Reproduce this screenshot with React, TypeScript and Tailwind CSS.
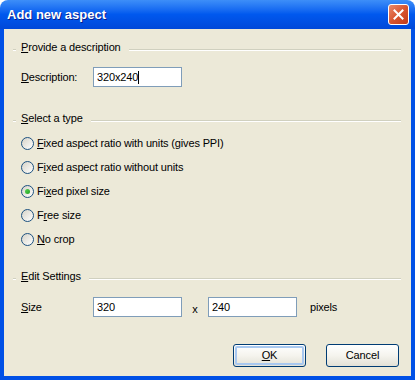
import React from 'react';

const font = { fontFamily: '"Liberation Sans", Arial, sans-serif' };

function GroupHeader({ children }: { children: React.ReactNode }) {
  return (
    <div className="flex items-center h-[14px] pl-[9px] pr-[10px]">
      <div className="w-[3px] h-[2px] mt-[6px] border-t border-[#d0d0bf] bg-white" />
      <div className="ml-[5px] text-[11px] tracking-[-0.15px] text-black leading-[14px]">{children}</div>
      <div className="flex-1 ml-[8px] mt-[6px] h-[2px] border-t border-[#d0d0bf] border-b border-b-white" />
    </div>
  );
}

function Radio({ label, checked }: { label: React.ReactNode; checked?: boolean }) {
  return (
    <div className="flex items-center h-[24px] pl-[17px]">
      <div className="w-[13px] h-[13px] rounded-full border border-[#1c5180] bg-gradient-to-br from-[#d6d3c8] to-white flex items-center justify-center">
        {checked && <div className="w-[5px] h-[5px] rounded-full bg-gradient-to-br from-[#55d651] to-[#21a121]" />}
      </div>
      <div className="ml-[3px] text-[11px] tracking-[-0.15px] leading-[14px]">{label}</div>
    </div>
  );
}

function Input({ value, caret, width }: { value: string; caret?: boolean; width: string }) {
  return (
    <div className={`${width} h-[20px] border border-[#7f9db9] bg-white flex items-center pl-[3px] text-[11px] tracking-[-0.15px]`}>
      <span>{value}</span>
      {caret && <span className="w-px h-[13px] bg-black" />}
    </div>
  );
}

function Button({ children, focused }: { children: React.ReactNode; focused?: boolean }) {
  return (
    <div className="w-[73px] h-[23px] rounded-[3px] border border-[#003c74] bg-gradient-to-b from-white via-[#f5f4ee] to-[#e3e1d6] p-px">
      <div className={`w-full h-full rounded-[2px] flex items-center justify-center text-[11px] tracking-[-0.15px] ${focused ? 'border-2 border-[#a8c8f0]' : ''}`}>
        {children}
      </div>
    </div>
  );
}

export default function App() {
  return (
    <div className="w-[415px] h-[380px] bg-white flex flex-col text-black" style={font}>
      <div className="h-[29px] rounded-t-[8px] bg-gradient-to-b from-[#3d8ef8] via-[#0058ee] to-[#0048d9] flex items-center pl-[7px] pr-[6px] shrink-0">
        <div className="text-white font-bold text-[13px] [text-shadow:1px_1px_0_#0a1e8c]">Add new aspect</div>
        <div className="ml-auto w-[21px] h-[21px] rounded-[3px] border border-white bg-gradient-to-br from-[#e8896a] via-[#d9552f] to-[#c23a17] flex items-center justify-center">
          <svg width="11" height="11" viewBox="0 0 11 11">
            <path d="M1.5 1.5 L9.5 9.5 M9.5 1.5 L1.5 9.5" stroke="white" strokeWidth="2" strokeLinecap="square" />
          </svg>
        </div>
      </div>
      <div className="flex-1 bg-[#ece9d8] border-x-4 border-b-4 border-[#0050e6] flex flex-col">
        <div className="mt-[11px]">
          <GroupHeader><u>P</u>rovide a description</GroupHeader>
        </div>
        <div className="mt-[13px] flex items-center pl-[17px]">
          <div className="w-[72px] text-[11px] tracking-[-0.15px]"><u>D</u>escription:</div>
          <Input value="320x240" caret width="w-[89px]" />
        </div>
        <div className="mt-[24px]">
          <GroupHeader><u>S</u>elect a type</GroupHeader>
        </div>
        <div className="mt-[6px] flex flex-col">
          <Radio label={<><u>F</u>ixed aspect ratio with units (gives PPI)</>} />
          <Radio label={<>F<u>i</u>xed aspect ratio without units</>} />
          <Radio checked label={<>Fi<u>x</u>ed pixel size</>} />
          <Radio label={<>F<u>r</u>ee size</>} />
          <Radio label={<><u>N</u>o crop</>} />
        </div>
        <div className="mt-[18px]">
          <GroupHeader><u>E</u>dit Settings</GroupHeader>
        </div>
        <div className="mt-[14px] flex items-center pl-[17px]">
          <div className="w-[72px] text-[11px] tracking-[-0.15px]"><u>S</u>ize</div>
          <Input value="320" width="w-[89px]" />
          <div className="w-[26px] text-center text-[11px] pt-[4px]">x</div>
          <Input value="240" width="w-[89px]" />
          <div className="ml-[13px] text-[11px] tracking-[-0.15px]">pixels</div>
        </div>
        <div className="mt-[26px] flex justify-end gap-[20px] pr-[12px]">
          <Button focused><u>O</u>K</Button>
          <Button>Cancel</Button>
        </div>
      </div>
    </div>
  );
}
